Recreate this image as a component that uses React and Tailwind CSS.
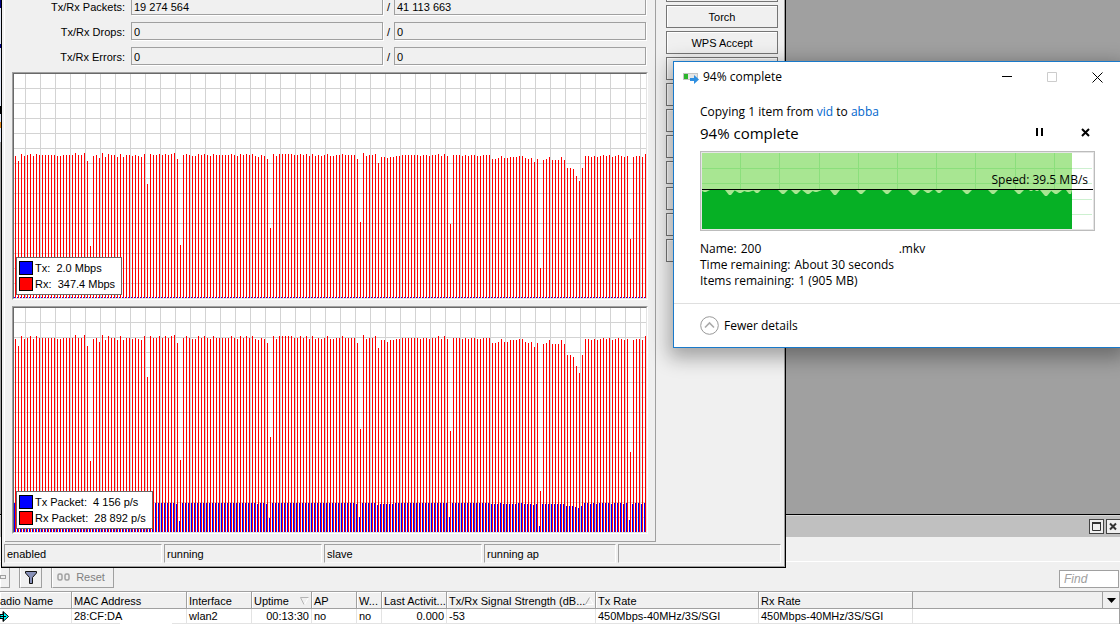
import React from 'react';

// top edge of every Rx sample, in chart rows (0 = top of the plot)
const RX_TOPS = [
  82, 87, 80, 82, 81, 80, 82, 80, 81, 81, 81, 81, 81, 81, 82, 82, 81, 81, 81, 81,
  79, 81, 81, 79, 87, 172, 82, 81, 84, 79, 83, 80, 81, 81, 83, 80, 83, 81, 81, 82,
  81, 82, 83, 80, 110, 80, 81, 81, 80, 81, 80, 81, 80, 79, 85, 171, 81, 80, 81, 82,
  82, 80, 81, 80, 81, 82, 80, 81, 81, 81, 81, 81, 80, 81, 82, 80, 81, 80, 81, 80,
  82, 83, 81, 82, 85, 154, 80, 82, 80, 80, 80, 80, 80, 81, 81, 80, 81, 80, 82, 80,
  82, 81, 82, 81, 80, 82, 82, 81, 81, 80, 81, 81, 81, 81, 85, 148, 79, 82, 81, 81,
  80, 89, 83, 83, 84, 83, 83, 82, 82, 81, 81, 81, 81, 81, 81, 82, 81, 81, 82, 81,
  81, 80, 82, 80, 82, 150, 81, 81, 81, 82, 81, 82, 81, 81, 82, 82, 81, 81, 81, 85,
  85, 84, 82, 84, 84, 83, 83, 83, 82, 82, 84, 85, 84, 88, 85, 194, 86, 85, 83, 86,
  86, 86, 83, 86, 94, 94, 95, 102, 107, 94, 82, 82, 83, 82, 83, 82, 81, 82, 81, 83,
  82, 81, 82, 83, 82, 165, 83, 82, 82, 83, 80,
];

const PLOT_W = 632;
const PLOT_H = 224;

const bitRate = RX_TOPS.map((top) => ({ rx: PLOT_H - top, tx: 1 }));
const packetRate = RX_TOPS.map((top) => {
  const rx = PLOT_H - Math.round(31 + (top - 82) * 1.357);
  return { rx, tx: Math.round(rx * 0.148) };
});

const bars = (samples, key, offset) =>
  samples.map((s, i) => `M${offset + i * 3} ${PLOT_H}v${-s[key]}h1v${s[key]}z`).join('');

const TrafficChart = ({ samples, legend, label }) => {
  const columns = Array.from({ length: 42 }, (_, i) => `M${11 + i * 15} 0h1v${PLOT_H}h-1z`).join('');
  const rows = Array.from({ length: 14 }, (_, i) => `M0 ${14 + i * 15}h${PLOT_W}v1h-${PLOT_W}z`).join('');

  return (
    <div className="relative border border-t-[#a0a0a0] border-l-[#a0a0a0] border-r-white border-b-white">
      <div className="border border-t-[#696969] border-l-[#696969] border-r-[#e3e3e3] border-b-[#e3e3e3] bg-white">
        <svg
          className="block w-full h-[224px]"
          viewBox={`0 0 ${PLOT_W} ${PLOT_H}`}
          preserveAspectRatio="none"
          shapeRendering="crispEdges"
          role="img"
          aria-label={label}
        >
          <path d={columns + rows} fill="#d3d3d3" />
          <path d={bars(samples, 'rx', 1)} fill="#ff0000" />
          <path d={bars(samples, 'tx', 0)} fill="#0000ff" />
        </svg>
      </div>
      <ul className="absolute left-[3px] bottom-1 border border-[#696969] bg-white pl-0.5 pr-1.5 py-0.5">
        {legend.map((item) => (
          <li key={item.name} className="flex items-center h-4 whitespace-pre">
            <span className={`w-3.5 h-3.5 mr-0.5 border border-black ${item.color}`} />
            {item.name}:{'  '}{item.value}
          </li>
        ))}
      </ul>
    </div>
  );
};

const ReadOnlyField = ({ id, value, label }) => (
  <input
    id={id}
    readOnly
    aria-label={label}
    defaultValue={value}
    className="min-w-0 flex-1 h-[18px] px-0.5 pt-0.5 border border-[#a0a0a0] bg-[#f0f0f0] shadow-[1px_1px_0_#fff] outline-none"
  />
);

const CounterRow = ({ id, label, tx, rx }) => (
  <div className="flex items-center h-[18px] mb-[7px]">
    <label htmlFor={id} className="w-[113px] mr-1.5 pt-0.5 text-right">{label}:</label>
    <ReadOnlyField id={id} value={tx} />
    <span className="w-[11px] text-center pt-0.5">/</span>
    <ReadOnlyField value={rx} label={`${label} received`} />
  </div>
);

const ACTIONS = ['', 'Torch', 'WPS Accept', 'Scan...', 'Freq. Usage...', 'Align...', 'Sniff...', 'Snooper...', 'Reset', 'Remove', 'Copy'];

const STATUS = [
  { text: 'enabled', width: 'w-[158px]' },
  { text: 'running', width: 'w-[158px]' },
  { text: 'slave', width: 'w-[158px]' },
  { text: 'running ap', width: 'w-[132px]' },
  { text: '', width: 'flex-1' },
];

const InterfaceWindow = () => (
  <section className="absolute left-px -top-6 w-[785px] bg-[#f0f0f0] border-l border-r border-b border-black">
    <div className="pl-0.5 border-r border-b border-[#a0a0a0]">
      <div className="flex border-l border-white">
        <div className="flex-1 pl-[7px] pr-[7px] pt-[21px] pb-[7px] border-r border-b border-[#a0a0a0]">
          <div className="pr-0.5">
            <CounterRow id="packets" label="Tx/Rx Packets" tx="19 274 564" rx="41 113 663" />
            <CounterRow id="drops" label="Tx/Rx Drops" tx="0" rx="0" />
            <CounterRow id="errors" label="Tx/Rx Errors" tx="0" rx="0" />
          </div>
          <div className="flex flex-col gap-1.5">
            <TrafficChart
              label="Bit rate"
              samples={bitRate}
              legend={[
                { name: 'Tx', value: '2.0 Mbps', color: 'bg-[#0000ff]' },
                { name: 'Rx', value: '347.4 Mbps', color: 'bg-[#ff0000]' },
              ]}
            />
            <TrafficChart
              label="Packet rate"
              samples={packetRate}
              legend={[
                { name: 'Tx Packet', value: '4 156 p/s', color: 'bg-[#0000ff]' },
                { name: 'Rx Packet', value: '28 892 p/s', color: 'bg-[#ff0000]' },
              ]}
            />
          </div>
        </div>
        <div className="w-[128px] pt-[3px] pl-2.5 pr-1.5 flex flex-col gap-[3px]">
          {ACTIONS.map((name, i) => (
            <button
              key={i}
              type="button"
              className="h-[23px] border border-[#757575] bg-[#f0f0f0] shadow-[inset_1px_1px_0_#fff]"
            >
              {i < 3 ? name : ''}
            </button>
          ))}
        </div>
      </div>
      <div className="flex gap-0.5 pt-0.5 pb-[3px] pr-[3px]">
        {STATUS.map((cell, i) => (
          <div
            key={i}
            className={`h-[19px] leading-[18px] pl-0.5 border border-t-[#a0a0a0] border-l-[#a0a0a0] border-r-white border-b-[#f8f8f8] ${cell.width}`}
          >
            {cell.text}
          </div>
        ))}
      </div>
    </div>
  </section>
);

// [centre, half width, depth] of each dip below the average speed line
const DIPS = [
  [3, 5, 2], [28, 5, 5], [38, 6, 3], [46, 7, 2], [55, 4, 3], [81, 5, 4], [94, 5, 4], [106, 6, 4], [114, 6, 2],
  [133, 5, 5], [159, 5, 4], [185, 5, 4], [212, 6, 5], [226, 5, 3], [237, 4, 3], [265, 5, 4], [291, 5, 4],
  [317, 5, 4], [329, 2, 1], [335, 2, 1], [344, 6, 6], [354, 6, 4], [368, 4, 4],
];

const SpeedChart = () => (
  <div className="relative border border-[#bcbcbc] bg-white">
    <svg className="block w-full h-[78px] border border-[#e6e6e6]" viewBox="0 0 391 76" preserveAspectRatio="none" role="img" aria-label="Copy speed">
      <path d="M0 15.5h390M0 30.5h390M0 46.5h390M0 61.5h390" stroke="#cdf0d0" fill="none" />
      <rect width="370" height="76" fill="#a8e692" />
      <path
        d="M0 15.5h370M0 30.5h370M38.5 0v37M77.5 0v37M117.5 0v37M156.5 0v37M195.5 0v37M234.5 0v37M273.5 0v37M313.5 0v37M352.5 0v37"
        stroke="#8bdf7c"
        fill="none"
      />
      <rect y="37" width="370" height="39" fill="#06b025" />
      {DIPS.map(([x, half, depth]) => (
        <path key={x} d={`M${x - half} 37h${Math.min(half * 2, 370 - x + half)}L${x + 1} ${37 + depth}h-2z`} fill="#a8e692" />
      ))}
      <rect y="36" width="391" height="1" fill="#000" />
    </svg>
    <p className="absolute right-1.5 top-5 leading-4 text-black">Speed: 39.5 MB/s</p>
  </div>
);

const CopyDialog = () => (
  <section className="absolute left-[673px] top-[61px] w-[449px] bg-white border border-[#1979ca] shadow-[0_6px_18px_4px_rgba(0,0,0,0.32)] font-['Open_Sans','Noto_Sans',sans-serif] text-[12px] leading-4 text-black">
    <header className="flex items-center h-[30px] pl-[9px] pr-[18px]">
      <svg width="16" height="12" viewBox="0 0 16 12" className="mr-1 mt-0.5" aria-hidden="true">
        <rect x="0.5" y="1.5" width="14" height="6" fill="#e6e6e6" stroke="#c4c4c4" />
        <rect x="1" y="2" width="4" height="5" fill="#2cb52c" />
        <path d="M7 6h4V3l5 4.500-5 4.500V9H7z" fill="#2f8fe0" />
      </svg>
      <h1 className="flex-1">94% complete</h1>
      <div className="flex items-center gap-[34px]">
        <button type="button" aria-label="Minimize">
          <svg width="11" height="11" viewBox="0 0 11 11" className="block"><path d="M0 4.500h10" stroke="#000" /></svg>
        </button>
        <button type="button" aria-label="Maximize" disabled>
          <svg width="11" height="11" viewBox="0 0 11 11" className="block"><path d="M.5.5h9v9h-9z" fill="none" stroke="#ccc" /></svg>
        </button>
        <button type="button" aria-label="Close">
          <svg width="11" height="11" viewBox="0 0 11 11" className="block"><path d="M.5.5l10 10M10.500.5l-10 10" stroke="#000" /></svg>
        </button>
      </div>
    </header>
    <div className="pl-[26px] pr-[26px] pt-3 pb-[14px]">
      <p>
        Copying 1 item from <a href="#vid" className="text-[#0066cc]">vid</a> to <a href="#abba" className="text-[#0066cc]">abba</a>
      </p>
      <div className="flex items-center justify-between h-[25px] pr-[5px] mb-1.5">
        <h2 className="text-[15px]">94% complete</h2>
        <div className="flex items-center gap-[37px]">
          <button type="button" aria-label="Pause">
            <svg width="9" height="9" viewBox="0 0 9 9" className="block"><path d="M1 0h2v8H1zM6 0h2v8H6z" /></svg>
          </button>
          <button type="button" aria-label="Cancel">
            <svg width="9" height="9" viewBox="0 0 9 9" className="block"><path d="M1 1l7 7M8 1l-7 7" stroke="#000" strokeWidth="2" /></svg>
          </button>
        </div>
      </div>
      <SpeedChart />
      <dl className="mt-2.5">
        <div className="flex gap-1">
          <dt>Name:</dt>
          <dd className="flex"><span className="w-[158px]">200</span>.mkv</dd>
        </div>
        <div className="flex gap-1">
          <dt>Time remaining:</dt>
          <dd>About 30 seconds</dd>
        </div>
        <div className="flex gap-1">
          <dt>Items remaining:</dt>
          <dd>1 (905 MB)</dd>
        </div>
      </dl>
    </div>
    <footer className="border-t border-[#dfdfdf] h-11 pl-[26px] flex items-center">
      <button type="button" className="flex items-center gap-[5px]">
        <svg width="19" height="19" viewBox="0 0 19 19" fill="none" aria-hidden="true">
          <circle cx="9.500" cy="9.500" r="8.800" stroke="#999" />
          <path d="M5 11.500l4.500-4.500 4.500 4.500" stroke="#aaa" strokeWidth="1.600" />
        </svg>
        Fewer details
      </button>
    </footer>
  </section>
);

const COLUMNS = [
  { title: 'Radio Name', width: 'w-[72px]', value: '' },
  { title: 'MAC Address', width: 'w-[115px]', value: '28:CF:DA' },
  { title: 'Interface', width: 'w-[65px]', value: 'wlan2' },
  { title: 'Uptime', width: 'w-[60px]', value: '00:13:30', align: 'text-right', sort: 'down' },
  { title: 'AP', width: 'w-[45px]', value: 'no' },
  { title: 'W...', width: 'w-[25px]', value: 'no' },
  { title: 'Last Activit...', width: 'w-[65px]', value: '0.000', align: 'text-right' },
  { title: 'Tx/Rx Signal Strength (dB...', width: 'w-[149px]', value: '-53', sort: 'up' },
  { title: 'Tx Rate', width: 'w-[163px]', value: '450Mbps-40MHz/3S/SGI' },
  { title: 'Rx Rate', width: 'w-[154px]', value: '450Mbps-40MHz/3S/SGI' },
];

const SortMark = ({ direction }) => (
  <svg width="9" height="8" viewBox="0 0 9 8" fill="none" className="shrink-0" aria-hidden="true">
    {direction === 'down' ? (
      <>
        <path d="M8.500.5L4.500 7.500" stroke="#fff" />
        <path d="M8.500.5H.5l3.500 7" stroke="#b4b4b4" />
      </>
    ) : (
      <>
        <path d="M4.500.5l4 7H.5" stroke="#fff" />
        <path d="M.5 7.500L4.500.5" stroke="#a0a0a0" />
      </>
    )}
  </svg>
);

const RegistrationTable = () => (
  <table className="w-full table-fixed border-separate border-spacing-0 bg-white border-r border-[#a0a0a0]">
    <thead>
      <tr className="bg-[#f0f0f0]">
        {COLUMNS.map((col, i) => (
          <th
            key={col.title}
            className={`h-[18px] p-0 border-t border-b border-r border-[#a0a0a0] shadow-[inset_1px_1px_0_#fff] font-normal text-left ${col.width}`}
          >
            <div className={`flex items-center justify-between h-4 pt-0.5 pl-0.5 pr-0.5 whitespace-nowrap ${i === 0 ? '-ml-2.5' : ''}`}>
              {col.title}
              {col.sort && <SortMark direction={col.sort} />}
            </div>
          </th>
        ))}
        <th className="p-0 border-t border-b border-r border-[#a0a0a0]" />
        <th className="w-4 p-0 border-t border-b border-[#a0a0a0]">
          <button type="button" aria-label="Columns" className="flex w-full justify-center">
            <svg width="9" height="5" viewBox="0 0 9 5"><path d="M0 0h9L4.500 5z" /></svg>
          </button>
        </th>
      </tr>
    </thead>
    <tbody>
      <tr>
        {COLUMNS.map((col, i) => (
          <td key={col.title} className={`relative h-[15px] leading-[14px] p-0 px-0.5 border-b border-r border-[#e3e3e3] ${col.align || ''}`}>
            {i === 0 && (
              <svg width="9" height="11" viewBox="0 0 9 11" className="-ml-0.5" aria-label="Connected">
                <path d="M0 3.500h3v-3l5.500 5-5.500 5v-3H0z" fill="#00ffff" stroke="#000" />
                <path d="M3.500 1v9M0 5.500h6" stroke="#000" />
              </svg>
            )}
            {col.value}
            {i === 1 && <span className="absolute left-12 -bottom-px w-[52px] h-0.5 bg-white" />}
          </td>
        ))}
        <td colSpan={2} className="border-b border-[#e3e3e3]" />
      </tr>
    </tbody>
  </table>
);

const toolButton =
  'h-[22px] flex items-center justify-center border border-t-white border-l-white border-r-[#a0a0a0] border-b-[#a0a0a0] shadow-[-1px_0_0_#a0a0a0]';
const captionButton = 'w-[15px] h-[15px] flex items-center justify-center border border-[#444] bg-[#f0f0f0]';

const WirelessTables = () => (
  <section className="border-t border-black bg-white min-h-[130px]">
    <header className="flex items-center justify-end gap-0.5 h-[22px] -mr-px border-t border-[#d8d8d8] bg-[#c0c0c0]">
      <button type="button" aria-label="Restore" className={captionButton}>
        <svg width="9" height="9" viewBox="0 0 9 9"><path d="M.5 1h8M.5 0v8.500h8V0" fill="none" stroke="#333" strokeWidth="1" /><path d="M0 0h9v2H0z" fill="#333" /></svg>
      </button>
      <button type="button" aria-label="Close table" className={captionButton}>
        <svg width="9" height="9" viewBox="0 0 9 9"><path d="M1 1.500l6 6M7 1.500l-6 6" stroke="#333" strokeWidth="2" /></svg>
      </button>
    </header>
    <div className="h-6 bg-[#f0f0f0]" />
    <div className="flex items-end h-[30px] pb-[3px] pr-px border-t border-white bg-[#f0f0f0]">
      <button type="button" aria-label="Comment" className={`w-2.5 ${toolButton}`}>
        <span className="w-1.5 h-1 -ml-1 border border-[#a0a0a0]" />
      </button>
      <button type="button" aria-label="Filter" className={`w-[22px] ml-2.5 ${toolButton}`}>
        <svg width="12" height="13" viewBox="0 0 12 13">
          <path d="M.5.5h11v1.500L7.500 6.500v6h-3v-6L.5 2z" fill="#8790b8" stroke="#111" />
        </svg>
      </button>
      <button type="button" className={`w-[62px] ml-2.5 pr-1 gap-1.5 text-[#808080] ${toolButton}`}>
        <svg width="13" height="8" viewBox="0 0 13 8" fill="none" stroke="#a0a0a0" strokeWidth="1.500">
          <rect x="1" y="1" width="4" height="6" rx="1.500" />
          <rect x="8" y="1" width="4" height="6" rx="1.500" />
        </svg>
        Reset
      </button>
      <input
        type="text"
        placeholder="Find"
        aria-label="Find"
        className="w-[60px] h-[18px] ml-auto pl-1 border border-[#a0a0a0] bg-white italic text-[12px] placeholder:text-[#a0a0a0] outline-none"
      />
    </div>
    <RegistrationTable />
  </section>
);

// sliver of the window lying behind, left of the interface window
const BackgroundEdge = () => (
  <div className="absolute left-0 top-0 w-px h-[142px] bg-[#dfe6f5]">
    <div className="h-2 bg-[#000080]" />
    <div className="h-1 mt-9 bg-[#000080]" />
    <div className="h-2 mt-[58px] bg-black" />
    <div className="h-1.5 mt-2 bg-[#e08a20]" />
  </div>
);

export default function App() {
  return (
    <main className="relative flex flex-col min-h-screen overflow-hidden bg-[#a0a0a0] font-['Liberation_Sans',Arial,sans-serif] text-[11px] leading-[14px] text-black">
      <div className="flex-1" />
      <WirelessTables />
      <BackgroundEdge />
      <InterfaceWindow />
      <CopyDialog />
    </main>
  );
}
